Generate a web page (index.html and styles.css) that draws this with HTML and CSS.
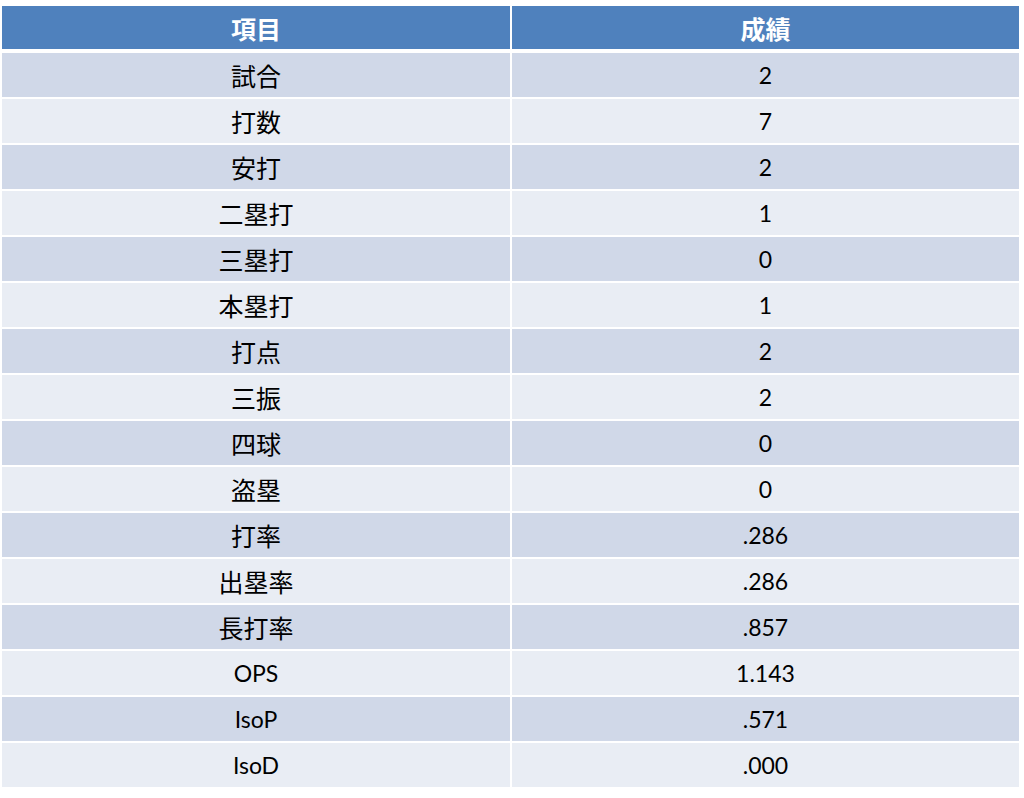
FILE: index.html
```html
<!DOCTYPE html>
<html lang="ja">
<head>
<meta charset="utf-8">
<title>成績</title>
<link rel="stylesheet" href="styles.css">
</head>
<body>
<div class="stats">
  <div class="cell head ja">項目</div><div class="cell head ja">成績</div>
  <div class="cell odd ja">試合</div><div class="cell odd num">2</div>
  <div class="cell even ja">打数</div><div class="cell even num">7</div>
  <div class="cell odd ja">安打</div><div class="cell odd num">2</div>
  <div class="cell even ja">二塁打</div><div class="cell even num">1</div>
  <div class="cell odd ja">三塁打</div><div class="cell odd num">0</div>
  <div class="cell even ja">本塁打</div><div class="cell even num">1</div>
  <div class="cell odd ja">打点</div><div class="cell odd num">2</div>
  <div class="cell even ja">三振</div><div class="cell even num">2</div>
  <div class="cell odd ja">四球</div><div class="cell odd num">0</div>
  <div class="cell even ja">盗塁</div><div class="cell even num">0</div>
  <div class="cell odd ja">打率</div><div class="cell odd num">.286</div>
  <div class="cell even ja">出塁率</div><div class="cell even num">.286</div>
  <div class="cell odd ja">長打率</div><div class="cell odd num">.857</div>
  <div class="cell even num">OPS</div><div class="cell even num">1.143</div>
  <div class="cell odd num">IsoP</div><div class="cell odd num">.571</div>
  <div class="cell even num">IsoD</div><div class="cell even num">.000</div>
</div>
</body>
</html>
```
FILE: styles.css
```css
html, body {
  margin: 0;
  padding: 0;
  background: #ffffff;
}

.stats {
  display: grid;
  grid-template-columns: 508px 507px;
  grid-template-rows: 45px repeat(16, 44px);
  column-gap: 2px;
  row-gap: 2px;
  margin: 6px 0 0 2px;
  width: 1017px;
}

.cell {
  display: flex;
  align-items: center;
  justify-content: center;
  color: #000000;
}

.head {
  background: #4f81bd;
  color: #ffffff;
  font-weight: bold;
  height: 43px;
  align-self: start;
}

.odd {
  background: #d0d8e8;
}

.even {
  background: #e9edf4;
}

.ja {
  font-family: "Noto Sans CJK JP", sans-serif;
  font-size: 25px;
}

.num {
  font-family: Lato, "Noto Sans", sans-serif;
  font-size: 23px;
}
```
